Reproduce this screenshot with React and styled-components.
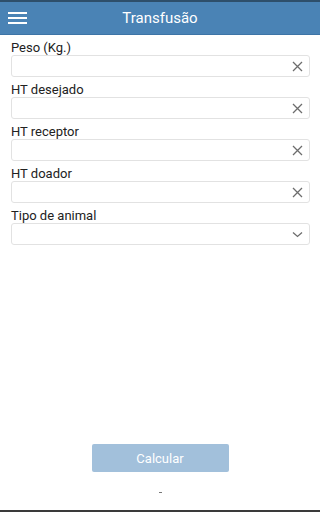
import styled, { createGlobalStyle } from 'styled-components'

const GlobalStyle = createGlobalStyle`
   html, body {
      margin: 0;
      padding: 0;
      height: 100%;
      background: #fff;
   }
   #root {
      height: 100%;
   }
   * {
      box-sizing: border-box;
   }
`

const Page = styled.div`
   display: flex;
   flex-direction: column;
   height: 100vh;
   font-family: Roboto, 'Liberation Sans', sans-serif;
   color: #222;
   border-bottom: 2px solid #3a3a3a;
`

const Header = styled.header`
   position: relative;
   display: flex;
   align-items: center;
   justify-content: center;
   height: 35px;
   background: #4a83b5;
   border-top: 2px solid #2e4f6b;
   border-bottom: 1px solid #3d74a6;
`

const MenuButton = styled.button`
   position: absolute;
   left: 8px;
   top: 10px;
   display: flex;
   flex-direction: column;
   gap: 3px;
   width: 19px;
   padding: 0;
   border: none;
   background: none;

   span {
      display: block;
      height: 2px;
      background: #fff;
   }
`

const Title = styled.h1`
   margin: 0;
   font-size: 15px;
   font-weight: 400;
   color: #fff;
`

const Form = styled.div`
   display: flex;
   flex-direction: column;
   padding: 0 10px 0 11px;
`

const Label = styled.label`
   display: block;
   height: 20px;
   line-height: 25px;
   font-size: 13px;
   color: #222;
`

const Field = styled.div`
   display: flex;
   align-items: center;
   height: 22px;
   border: 1px solid #e2e2e2;
   border-radius: 3px;
   background: #fff;
`

const Input = styled.input`
   flex: 1;
   min-width: 0;
   height: 100%;
   padding: 0 6px;
   border: none;
   outline: none;
   background: transparent;
   font: inherit;
   font-size: 13px;
`

const IconSlot = styled.span`
   display: flex;
   align-items: center;
   justify-content: center;
   width: 24px;
   height: 100%;
   color: #6d6d6d;
`

const Footer = styled.div`
   margin-top: auto;
   display: flex;
   flex-direction: column;
   align-items: center;
   padding-bottom: 17px;
`

const CalcButton = styled.button`
   width: 137px;
   height: 28px;
   border: none;
   border-radius: 2px;
   background: #a2c0db;
   color: #fff;
   font-family: Roboto, 'Liberation Sans', sans-serif;
   font-size: 13px;
`

const Dash = styled.span`
   margin-top: 20px;
   width: 3px;
   height: 1px;
   background: #777;
`

const ClearIcon = () => (
   <svg width="11" height="11" viewBox="0 0 11 11">
      <path d="M1 1 L10 10 M10 1 L1 10" stroke="currentColor" strokeWidth="1.3" fill="none" />
   </svg>
)

const ChevronIcon = () => (
   <svg width="11" height="7" viewBox="0 0 11 7">
      <path d="M1 1.5 L5.5 5.5 L10 1.5" stroke="currentColor" strokeWidth="1.3" fill="none" />
   </svg>
)

const fields = ['Peso (Kg.)', 'HT desejado', 'HT receptor', 'HT doador']

export default function App() {
   return (
      <>
         <GlobalStyle />
         <Page>
            <Header>
               <MenuButton aria-label="menu">
                  <span />
                  <span />
                  <span />
               </MenuButton>
               <Title>Transfusão</Title>
            </Header>
            <Form>
               {fields.map(name => (
                  <div key={name}>
                     <Label>{name}</Label>
                     <Field>
                        <Input type="text" />
                        <IconSlot>
                           <ClearIcon />
                        </IconSlot>
                     </Field>
                  </div>
               ))}
               <div>
                  <Label>Tipo de animal</Label>
                  <Field>
                     <Input as="div" />
                     <IconSlot>
                        <ChevronIcon />
                     </IconSlot>
                  </Field>
               </div>
            </Form>
            <Footer>
               <CalcButton>Calcular</CalcButton>
               <Dash />
            </Footer>
         </Page>
      </>
   )
}
